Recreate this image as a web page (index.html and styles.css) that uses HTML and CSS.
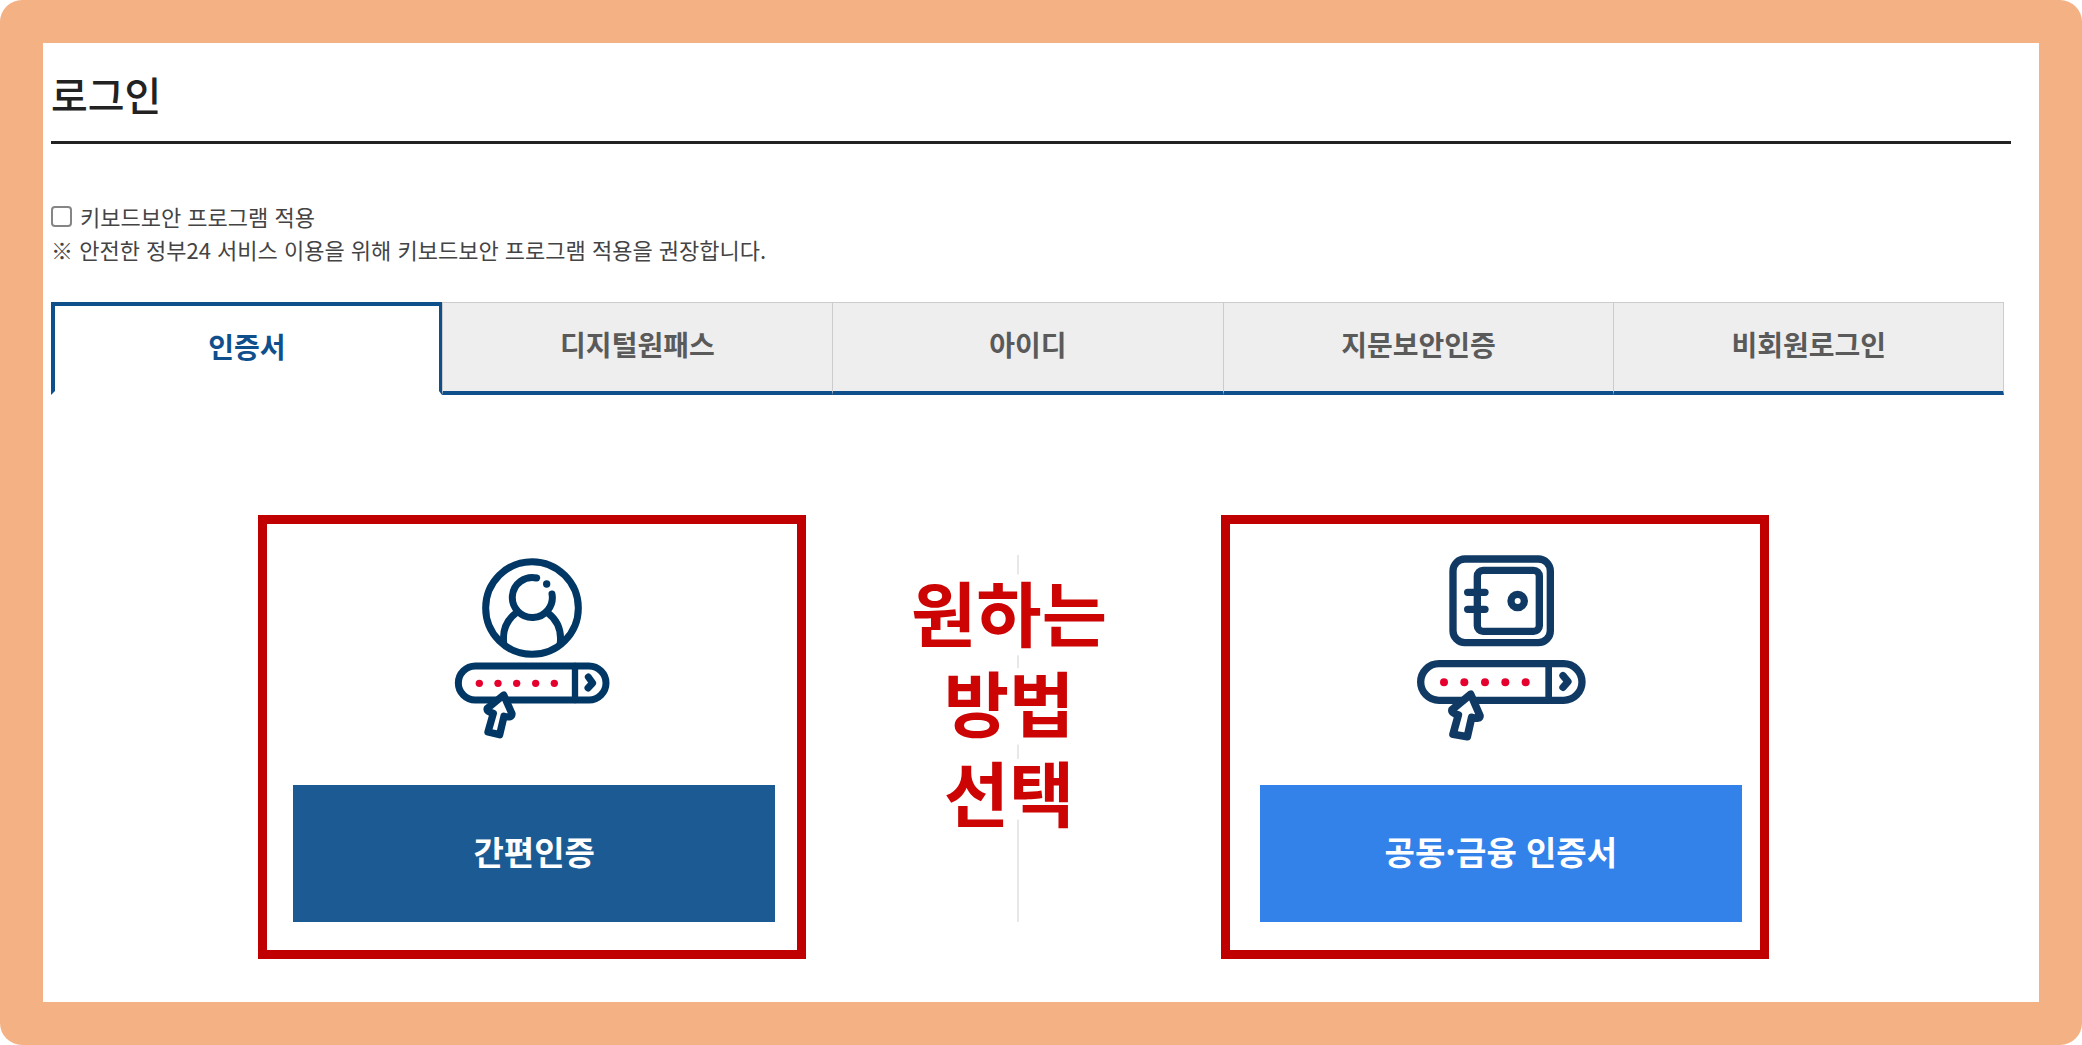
FILE: index.html
```html
<!DOCTYPE html>
<html lang="ko">
<head>
<meta charset="utf-8">
<meta name="viewport" content="width=device-width, initial-scale=1">
<title>로그인</title>
<link rel="stylesheet" href="styles.css">
</head>
<body>
<div class="frame">
  <main class="panel">
    <h1 class="title">로그인</h1>
    <div class="security">
      <label class="check" for="keysec"><input type="checkbox" id="keysec">키보드보안 프로그램 적용</label>
      <p class="note">※ 안전한 정부24 서비스 이용을 위해 키보드보안 프로그램 적용을 권장합니다.</p>
    </div>
    <nav class="tabs" role="tablist">
      <button class="tab active" type="button" role="tab" aria-selected="true">인증서</button>
      <button class="tab" type="button" role="tab" aria-selected="false">디지털원패스</button>
      <button class="tab" type="button" role="tab" aria-selected="false">아이디</button>
      <button class="tab" type="button" role="tab" aria-selected="false">지문보안인증</button>
      <button class="tab" type="button" role="tab" aria-selected="false">비회원로그인</button>
    </nav>
    <div class="choices">
      <section class="card card-simple">
        <svg class="icon icon-person" viewBox="-3 0 570 630" aria-hidden="true">
          <g fill="none" stroke="currentColor" stroke-width="21" stroke-linecap="round" stroke-linejoin="round">
            <circle cx="276" cy="204" r="139"/>
            <path d="M290 114A60 60 0 1 0 336 162"/>
            <path d="M229 218C200 240 187 268 191 308M323 218C352 240 365 268 361 308"/>
            <rect x="55" y="378" width="443" height="102" rx="51"/>
            <path d="M405 378V480" stroke-width="19"/>
            <path d="M445 411L458 429L444 444"/>
            <path fill="#fff" d="M191 464L141 508L162 524L145 575L179 584L194 530L216 530Z" stroke="none"/>
            <path fill="#fff" d="M191 465L142 505Q138 514 160 520L144 576L179 584L192 529Q216 535 216 521Z" stroke-width="22"/>
          </g>
          <circle cx="320" cy="132" r="11" fill="currentColor"/>
          <g class="dots"><circle cx="118" cy="430" r="11"/><circle cx="174" cy="430" r="11"/><circle cx="230" cy="430" r="11"/><circle cx="287" cy="430" r="11"/><circle cx="343" cy="430" r="11"/></g>
        </svg>
        <button class="action" type="button">간편인증</button>
      </section>
      <div class="guide"><p class="guide-text">원하는<br>방법<br>선택</p></div>
      <section class="card card-cert">
        <svg class="icon icon-safe" viewBox="3 0 600 630" aria-hidden="true">
          <g fill="none" stroke="currentColor" stroke-width="22" stroke-linecap="round" stroke-linejoin="round">
            <rect x="159" y="57" width="292" height="251" rx="36"/>
            <rect x="232" y="91" width="186" height="183" rx="17"/>
            <path d="M203 157H255M203 208H255"/>
            <circle cx="353" cy="183" r="20"/>
            <rect x="62" y="371" width="484" height="110" rx="55"/>
            <path d="M446 371V481" stroke-width="20"/>
            <path d="M489 407L504 425L489 442"/>
            <path fill="#fff" d="M212 463L156 509Q153 519 175 525L159 583L202 590L215 532Q240 539 240 527Z" stroke-width="23"/>
          </g>
          <g class="dots"><circle cx="132" cy="427" r="12"/><circle cx="193" cy="427" r="12"/><circle cx="255" cy="427" r="12"/><circle cx="316" cy="427" r="12"/><circle cx="377" cy="427" r="12"/></g>
        </svg>
        <button class="action" type="button">공동·금융 인증서</button>
      </section>
    </div>
  </main>
</div>
</body>
</html>
```
FILE: styles.css
```css
* { box-sizing: border-box; }

body {
  margin: 0;
  background: #fff;
  color: #222;
  font-family: "Noto Sans CJK KR", "Noto Sans", sans-serif;
}

button { font-family: inherit; cursor: pointer; }

.frame {
  display: flex;
  min-height: 100vh;
  padding: 43px;
  background: #f4b183;
  border-radius: 22px;
}

.panel {
  flex: 1;
  min-width: 0;
  padding: 20px 28px 43px 8px;
  background: #fff;
}

.title {
  margin: 0;
  padding-bottom: 16px;
  border-bottom: 3px solid #222;
  font-size: 40px;
  font-weight: 500;
  line-height: 62px;
}

.security {
  margin-top: 56px;
  color: #444;
  font-size: 22px;
  line-height: 33px;
}

.check { display: flex; align-items: center; gap: 8px; }

.check input {
  appearance: none;
  width: 21px;
  height: 21px;
  margin: 0;
  border: 2px solid #858585;
  border-radius: 4px;
  background: #fff;
}

.check input:checked { background: #0f4f8c; }

.note { margin: 0; }

.tabs {
  display: grid;
  grid-template-columns: repeat(5, 1fr);
  margin: 36px 7px 0 0;
}

.tab {
  height: 93px;
  padding: 0 0 6px;
  border: 1px solid #ccc;
  border-right-width: 0;
  border-bottom: 4px solid #0f4f8c;
  background: #eee;
  color: #5a5a5a;
  font-size: 28px;
  font-weight: 700;
}

.tab:last-child { border-right-width: 1px; }

.tab.active {
  border: 4px solid #0f4f8c;
  border-right-width: 3px;
  border-bottom-color: #fff;
  background: #fff;
  color: #0f4f8c;
}

.choices {
  display: grid;
  grid-template-columns: 548fr 414fr 548fr;
  margin-top: 120px;
  padding: 0 242px 0 207px;
}

.card {
  display: flex;
  flex-direction: column;
  align-items: center;
  gap: 35px;
  border: 9px solid #c00000;
}

.card-simple { padding: 16px 22px 28px 26px; }
.card-cert { padding: 16px 18px 28px 30px; }

.icon { height: 210px; color: #003764; }
.icon-person { width: 190px; }
.icon-safe { width: 200px; color: #103a64; }
.dots { fill: #e6002d; }

.action {
  width: 100%;
  height: 137px;
  padding: 0 0 6px;
  border: 0;
  background: #1c5a93;
  color: #fff;
  font-size: 33px;
  font-weight: 700;
}

.card-cert .action { background: #3282ea; }

.guide {
  position: relative;
  padding: 50px 9px 0 0;
}

.guide::before {
  content: "";
  position: absolute;
  top: 40px;
  bottom: 37px;
  left: calc(50% + 4px);
  width: 2px;
  background: #e8e8e8;
}

.guide-text {
  position: relative;
  margin: 0;
  color: #cc0404;
  font-size: 71px;
  font-weight: 700;
  line-height: 90px;
  text-align: center;
  -webkit-text-stroke: 14px #fff;
  paint-order: stroke fill;
}
```
